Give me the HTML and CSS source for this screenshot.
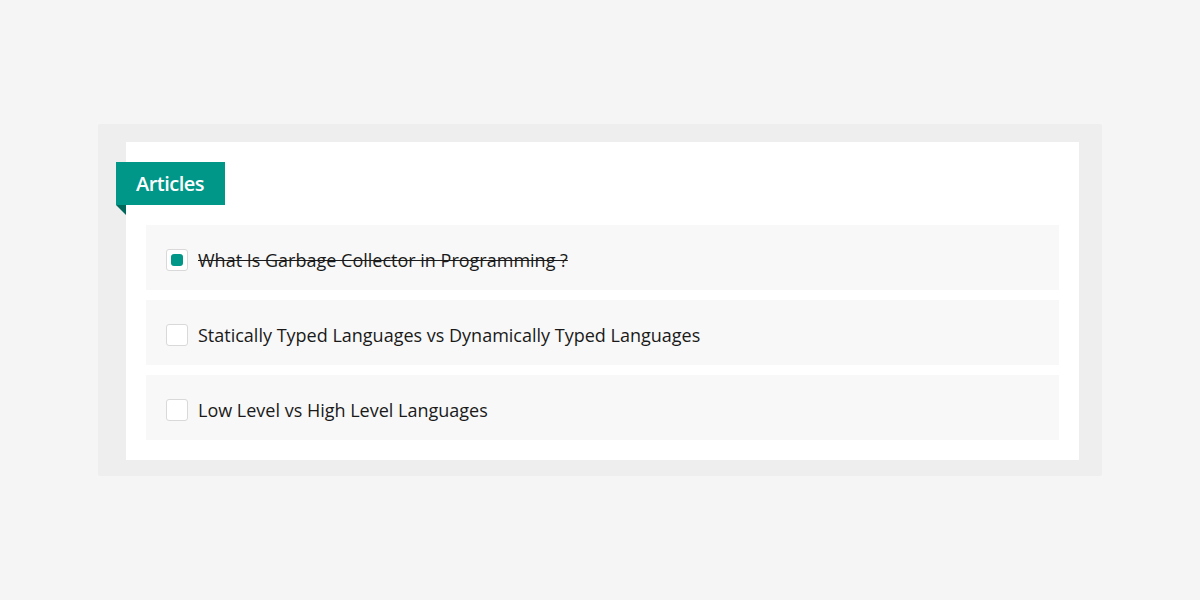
FILE: index.html
```html
<!DOCTYPE html>
<html>
<head>
<meta charset="utf-8">
<link rel="stylesheet" href="styles.css">
</head>
<body>
<div class="page">
  <div class="frame">
    <div class="card">
      <div class="ribbon">Articles</div>
      <ul class="list">
        <li class="item done"><span class="box"><span class="tick"></span></span><span class="label">What Is Garbage Collector in Programming ?</span></li>
        <li class="item"><span class="box"></span><span class="label">Statically Typed Languages vs Dynamically Typed Languages</span></li>
        <li class="item"><span class="box"></span><span class="label">Low Level vs High Level Languages</span></li>
      </ul>
    </div>
  </div>
</div>
</body>
</html>
```
FILE: styles.css
```css
html, body {
  margin: 0;
  padding: 0;
  background: #f5f5f5;
  font-family: "Open Sans", "Liberation Sans", sans-serif;
}
.page {
  width: 1200px;
  height: 600px;
  display: flex;
  justify-content: center;
  padding-top: 124px;
  box-sizing: border-box;
}
.frame {
  width: 1004px;
  height: 352px;
  box-sizing: border-box;
  background: #eeeeee;
  border-radius: 2px;
  padding: 18px 23px 16px 28px;
}
.card {
  background: #ffffff;
  height: 318px;
  box-sizing: border-box;
  padding: 20px 20px 20px 20px;
}
.ribbon {
  position: relative;
  margin-left: -30px;
  width: 109px;
  height: 43px;
  box-sizing: border-box;
  background: #009688;
  color: #ffffff;
  font-size: 20px;
  font-weight: 600;
  line-height: 43px;
  padding-left: 20px;
  letter-spacing: -0.5px;
}
.ribbon::after {
  content: "";
  position: absolute;
  left: 0;
  top: 43px;
  width: 0;
  height: 0;
  border-top: 10px solid #00695c;
  border-left: 10px solid transparent;
}
.list {
  list-style: none;
  margin: 20px 0 0 0;
  padding: 0;
  display: flex;
  flex-direction: column;
  gap: 10px;
}
.item {
  height: 65px;
  background: #f8f8f8;
  display: flex;
  align-items: center;
  padding: 5px 0 0 20px;
  box-sizing: border-box;
}
.box {
  width: 22px;
  height: 22px;
  box-sizing: border-box;
  border: 1px solid #d9d9d9;
  border-radius: 3px;
  background: #ffffff;
  display: flex;
  align-items: center;
  justify-content: center;
  margin-right: 10px;
  flex: none;
}
.tick {
  width: 12px;
  height: 12px;
  border-radius: 3px;
  background: #009688;
}
.label {
  font-size: 18px;
  color: #1a1a1a;
  line-height: 24px;
}
.done .label {
  text-decoration: line-through;
}
```
